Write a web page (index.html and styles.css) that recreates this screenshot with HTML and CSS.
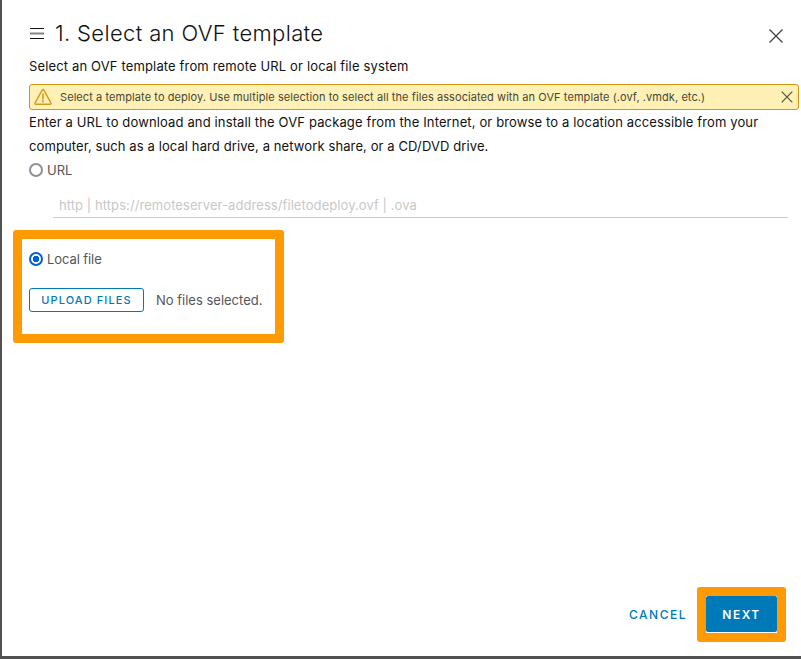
FILE: index.html
```html
<!DOCTYPE html>
<html lang="en">
<head>
<meta charset="utf-8">
<title>Deploy OVF Template</title>
<link rel="stylesheet" href="styles.css">
</head>
<body>
<main class="wizard">
  <header class="header">
    <svg class="menu" width="14" height="12" viewBox="0 0 14 12"><path d="M0 .5h14M0 10.500h14" stroke="#111"/><path d="M0 5.500h14" stroke="#858585" stroke-width="2"/></svg>
    <h1 class="title">1. Select an OVF template</h1>
    <svg class="close" width="14" height="14" viewBox="0 0 14 14"><path d="M.5.5l13 13M13.500.5l-13 13" stroke="#444" stroke-width="1.300"/></svg>
  </header>
  <p class="subtitle">Select an OVF template from remote URL or local file system</p>
  <div class="alert">
    <svg class="warn" width="18" height="18" viewBox="0 0 18 18" fill="none" stroke="#d39a1c" stroke-width="1.400" stroke-linejoin="round" stroke-linecap="round"><path d="M8.200 2.100Q9 .9 9.800 2.100L16.800 14.700Q17.400 16.200 16 16.300H2Q.6 16.200 1.200 14.700Z"/><path d="M9 6v5" stroke-width="1.600"/><circle cx="9" cy="13.400" r=".4"/></svg>
    <span class="alert-text">Select a template to deploy. Use multiple selection to select all the files associated with an OVF template (.ovf, .vmdk, etc.)</span>
    <svg class="dismiss" width="12" height="12" viewBox="0 0 12 12"><path d="M.7.7l10.600 10.600M11.300.7L.7 11.300" stroke="#544f3c" stroke-width="1.200"/></svg>
  </div>
  <p class="intro">Enter a URL to download and install the OVF package from the Internet, or browse to a location accessible from your<br><span class="intro-end">computer, such as a local hard drive, a network share, or a CD/DVD drive.</span></p>
  <label class="option"><i class="radio"></i><span>URL</span></label>
  <div class="url-field">http | https://remoteserver-address/filetodeploy.ovf | .ova</div>
  <section class="highlight local">
    <label class="option"><i class="radio checked"></i><span class="local-label">Local file</span></label>
    <div class="upload-row">
      <button class="upload">UPLOAD FILES</button>
      <span class="status">No files selected.</span>
    </div>
  </section>
  <footer class="footer">
    <button class="cancel">CANCEL</button>
    <div class="highlight next-box"><button class="next">NEXT</button></div>
  </footer>
</main>
</body>
</html>
```
FILE: styles.css
```css
* { box-sizing: border-box; }
body {
  margin: 0;
  height: 659px;
  padding: 0 0 3px 2px;
  background: #515151;
  color: #111;
  font: 13px/24px Inter, "Open Sans", sans-serif;
  overflow: hidden;
}
.wizard { display: flex; flex-direction: column; height: 656px; padding-left: 27px; background: #fff; }
.header { display: flex; align-items: center; height: 34px; margin-top: 16px; padding: 0 18px 0 1px; }
.menu { margin-top: 1px; }
.title { flex: 1; margin: 0 0 0 11px; font-size: 22px; font-weight: 300; line-height: 34px; letter-spacing: .35px; }
.close { margin-top: 6px; }
.subtitle { margin: 4px 0 0; letter-spacing: .145px; }
.alert { display: flex; align-items: center; height: 26px; margin: 6px 2px 0 0; padding: 0 5px 0 4px; border: 1px solid #d39512; border-radius: 3px; background: #fff1b5; color: #494536; font-size: 11px; letter-spacing: .078px; }
.alert-text { flex: 1; margin-left: 8px; white-space: nowrap; }
.intro { margin: 0; white-space: nowrap; letter-spacing: .135px; }
.intro-end { letter-spacing: .105px; }
.option { display: flex; align-items: center; gap: 4px; height: 24px; color: #565656; }
.radio { width: 14px; height: 14px; border: 2px solid #8f8f9d; border-radius: 50%; background: #fff; }
.radio.checked { border-color: #0060df; background: radial-gradient(circle, #0060df 3px, #fff 3.500px); }
.local-label { letter-spacing: -.08px; }
.url-field { width: 735px; height: 24px; margin: 12px 0 0 24px; padding-left: 6px; border-bottom: 1px solid #ccc; color: #c8c8c8; line-height: 22px; letter-spacing: .075px; }
.highlight { border: 9px solid #ff9a05; border-radius: 3px; }
.local { width: 271px; height: 113px; margin: 12px 0 0 -16px; padding: 8px 7px; }
.upload-row { display: flex; align-items: center; gap: 12px; margin-top: 17px; color: #565656; }
button { padding: 0; font: 500 12px/22px Inter, sans-serif; letter-spacing: 1.500px; }
.upload { width: 115px; height: 24px; border: 1px solid #0079b8; border-radius: 3px; background: #fff; color: #0079b8; font-size: 11px; letter-spacing: 1.100px; }
.footer { display: flex; align-items: center; justify-content: flex-end; gap: 10px; height: 55px; margin: auto 15px 14px 0; }
.cancel { border: 0; background: none; color: #0079b8; }
.next-box { width: 89px; height: 55px; background: #fff; }
.next { display: block; width: 71px; height: 36px; border: 0; border-radius: 2px; background: #0079b8; color: #fff; font-weight: 600; line-height: 38px; }
```
